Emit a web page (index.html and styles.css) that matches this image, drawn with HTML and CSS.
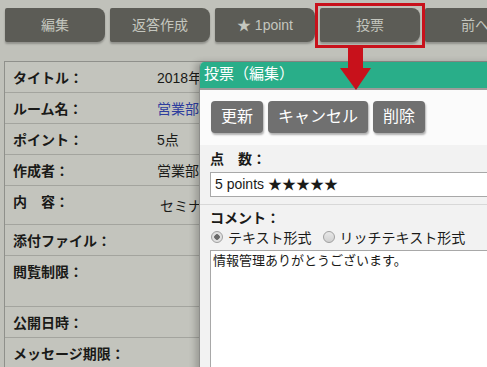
FILE: index.html
```html
<!DOCTYPE html>
<html lang="ja">
<head>
    <meta charset="UTF-8">
    <title>投票（編集）</title>
    <link rel="stylesheet" href="styles.css">
</head>
<body>
    <div class="action-bar">
        <div class="action-btn">編集</div>
        <div class="action-btn">返答作成</div>
        <div class="action-btn">★ 1point</div>
        <div class="action-btn">投票</div>
        <div class="action-btn">前へ</div>
    </div>

    <!-- annotation: highlight + arrow -->
    <div class="highlight"></div>
    <svg class="arrow" width="32" height="42" viewBox="0 0 32 42">
        <rect x="8" y="0" width="15" height="21" fill="#c8111b"/>
        <polygon points="0,20 31,20 16,42" fill="#c8111b"/>
    </svg>

    <div class="detail">
        <div class="row"><div class="label">タイトル：</div><div class="value">2018年</div></div>
        <div class="row"><div class="label">ルーム名：</div><div class="value link">営業部</div></div>
        <div class="row"><div class="label">ポイント：</div><div class="value">5点</div></div>
        <div class="row"><div class="label">作成者：</div><div class="value">営業部</div></div>
        <div class="row tall"><div class="label">内　容：</div><div class="value body">セミナー</div></div>
        <div class="row"><div class="label">添付ファイル：</div><div class="value"></div></div>
        <div class="row taller"><div class="label">閲覧制限：</div><div class="value"></div></div>
        <div class="row"><div class="label">公開日時：</div><div class="value"></div></div>
        <div class="row"><div class="label">メッセージ期限：</div><div class="value"></div></div>
    </div>

    <div class="dialog">
        <div class="dialog-title">投票（編集）</div>
        <div class="dialog-tools">
            <div class="tool-btn">更新</div>
            <div class="tool-btn">キャンセル</div>
            <div class="tool-btn">削除</div>
        </div>
        <div class="dialog-body">
            <div class="field-label">点　数：</div>
            <div class="select-box">5 points ★★★★★</div>
            <div class="sep"></div>
            <div class="field-label">コメント：</div>
            <div class="radios">
                <span class="radio checked"></span><span>テキスト形式</span>
                <span class="radio"></span><span>リッチテキスト形式</span>
            </div>
            <div class="textarea">情報管理ありがとうございます。</div>
        </div>
    </div>
</body>
</html>
```

FILE: styles.css
```css
body {
    margin: 0;
    width: 487px;
    height: 367px;
    overflow: hidden;
    position: relative;
    background-color: #c0c1ba;
    font-family: "Liberation Sans", "Noto Sans CJK JP", sans-serif;
    font-size: 14px;
    color: #1a1a18;
}

.action-bar {
    display: flex;
    gap: 5px;
    padding: 8px 0 0 5px;
    width: 600px;
}

.action-btn {
    flex: none;
    width: 100px;
    height: 34px;
    line-height: 34px;
    text-align: center;
    background-color: #5c5c56;
    color: #c4c6be;
    border-radius: 2px 8px 8px 2px;
    box-shadow: 0 2px 2px rgba(0, 0, 0, 0.25);
}

.highlight {
    position: absolute;
    left: 315px;
    top: 3px;
    width: 104px;
    height: 39px;
    border: 3px solid #c8111b;
}

.arrow {
    position: absolute;
    left: 340px;
    top: 48px;
    z-index: 5;
}

.detail {
    margin: 19px 0 0 4px;
    border-left: 1px solid #8f908b;
    border-top: 1px solid #8f908b;
    background-color: #c3c4bd;
}

.row {
    display: flex;
    height: 30px;
    border-bottom: 1px solid #a3a49e;
}

.row.tall {
    height: 38px;
}

.row.taller {
    height: 50px;
}

.label {
    width: 144px;
    padding: 8px 0 0 8px;
    font-weight: bold;
    line-height: 16px;
}

.value {
    padding-top: 8px;
    line-height: 16px;
}

.value.link {
    color: #2e3d9e;
}

.value.body {
    padding: 12px 0 0 3px;
}

.dialog {
    position: absolute;
    left: 199px;
    top: 62px;
    width: 320px;
    height: 320px;
    border-left: 1px solid #8d8d8a;
    border-radius: 5px 0 0 0;
    background-color: #f2f2f2;
    box-shadow: -4px 0 6px rgba(0, 0, 0, 0.2);
    overflow: hidden;
}

.dialog-title {
    height: 26px;
    line-height: 24px;
    padding-left: 4px;
    font-size: 15px;
    background-color: #29ae89;
    color: #ffffff;
    border-bottom: 2px solid #9c9c9a;
}

.dialog-tools {
    display: flex;
    gap: 5px;
    height: 55px;
    padding: 11px 0 0 11px;
    box-sizing: border-box;
    background-color: #fbfbfb;
}

.tool-btn {
    height: 32px;
    line-height: 32px;
    padding: 0 10px;
    background-color: #707070;
    color: #ffffff;
    font-size: 16px;
    border-radius: 4px;
    box-shadow: 1px 2px 2px rgba(0, 0, 0, 0.3);
}

.dialog-body {
    padding: 6px 0 0 10px;
}

.field-label {
    font-weight: bold;
    line-height: 16px;
}

.select-box {
    margin-top: 5px;
    height: 23px;
    line-height: 23px;
    padding-left: 4px;
    background-color: #ffffff;
    border: 1px solid #a8a8a8;
}

.sep {
    margin: 7px 0 5px -10px;
    border-top: 1px solid #d8d8d8;
}

.radios {
    display: flex;
    align-items: center;
    gap: 5px;
    height: 22px;
}

.radio {
    width: 12px;
    height: 12px;
    border: 1px solid #a0a0a0;
    border-radius: 50%;
    background: linear-gradient(#e8e8e8, #d0d0d0);
    box-sizing: border-box;
    margin-left: 6px;
}

.radio.checked {
    background: radial-gradient(circle, #6a6a6a 0 2.5px, #e0e0e0 3px);
    margin-left: 1px;
}

.textarea {
    margin-top: 2px;
    height: 140px;
    padding: 2px;
    background-color: #ffffff;
    border: 1px solid #a8a8a8;
    font-size: 13px;
    line-height: 16px;
}
```
